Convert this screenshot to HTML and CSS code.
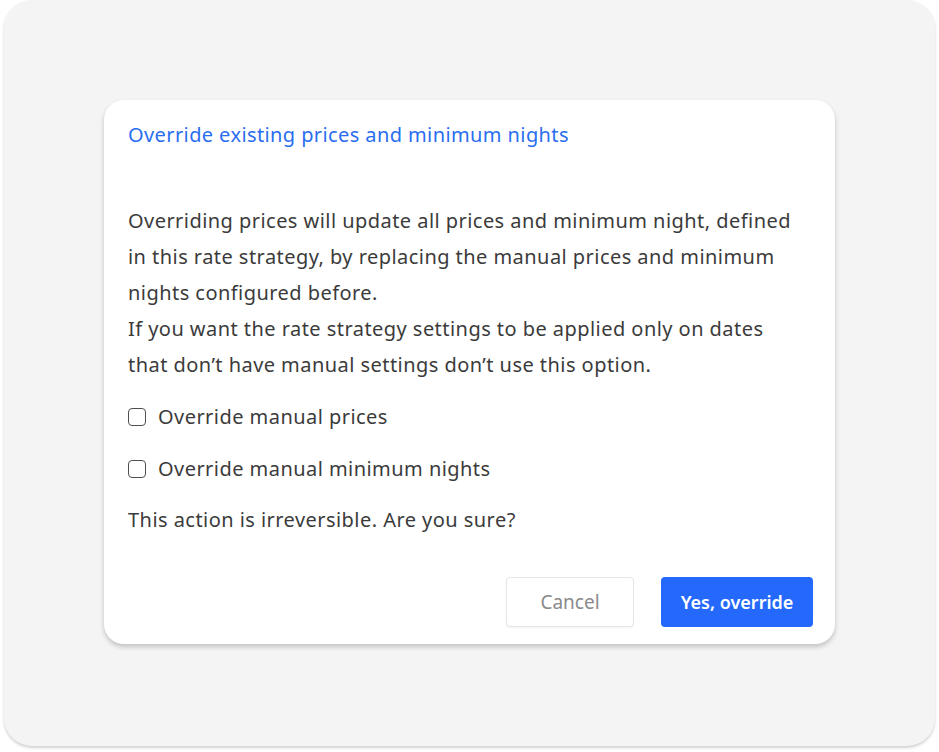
FILE: index.html
```html
<!DOCTYPE html>
<html>
<head>
<meta charset="utf-8">
<link rel="stylesheet" href="styles.css">
</head>
<body>
<div class="frame">
  <div class="modal">
    <h1 class="title">Override existing prices and minimum nights</h1>
    <div class="body">
      <p class="desc">Overriding prices will update all prices and minimum night, defined in this rate strategy, by replacing the manual prices and minimum nights configured before.<br>If you want the rate strategy settings to be applied only on dates that don’t have manual settings don’t use this option.</p>
      <label class="check"><span class="box"></span>Override manual prices</label>
      <label class="check"><span class="box"></span>Override manual minimum nights</label>
      <p class="warn">This action is irreversible. Are you sure?</p>
    </div>
    <div class="actions">
      <button class="btn cancel">Cancel</button>
      <button class="btn primary">Yes, override</button>
    </div>
  </div>
</div>
</body>
</html>
```
FILE: styles.css
```css
html, body { margin: 0; padding: 0; background: #ffffff; }
body {
  width: 939px; height: 752px;
  font-family: "Noto Sans", "Open Sans", sans-serif;
  padding: 0 4px 6px 4px;
  box-sizing: border-box;
}
.frame {
  height: 746px;
  background: #f4f4f4;
  border-radius: 28px;
  box-shadow: 0 2px 3px rgba(0,0,0,0.18);
  display: flex;
  justify-content: center;
  padding-top: 100px;
  box-sizing: border-box;
}
.modal {
  width: 731px;
  height: 544px;
  background: #fff;
  border-radius: 20px;
  box-shadow: 0 3px 5px rgba(0,0,0,0.2);
  box-sizing: border-box;
  padding: 18px 22px 0 24px;
}
.title {
  margin: 0;
  font-size: 20px;
  letter-spacing: 0.4px;
  font-weight: 400;
  color: #2a6ef0;
  line-height: 34px;
}
.body { color: #3b3b3b; font-size: 20px; letter-spacing: 0.45px; }
.desc { margin: 51px 0 0 0; line-height: 36px; max-width: 672px; }
.check { display: flex; align-items: center; gap: 12px; line-height: 36px; margin-top: 16px; }
.check + .check { margin-top: 16px; }
.box { width: 18px; height: 18px; border: 1.5px solid #4f4f4f; border-radius: 4px; box-sizing: border-box; }
.warn { margin: 15px 0 0 0; line-height: 36px; }
.actions { display: flex; justify-content: flex-end; gap: 27px; margin-top: 39px; }
.btn { font-family: inherit; font-size: 19px; height: 50px; border-radius: 4px; cursor: pointer; }
.cancel { width: 128px; background: #fff; border: 1px solid #e6e6e6; color: #8a8a8a; box-shadow: 0 1px 2px rgba(0,0,0,0.05); }
.primary { width: 152px; font-size: 18px; background: #2469fb; border: none; color: #fff; font-weight: 600; }
```
